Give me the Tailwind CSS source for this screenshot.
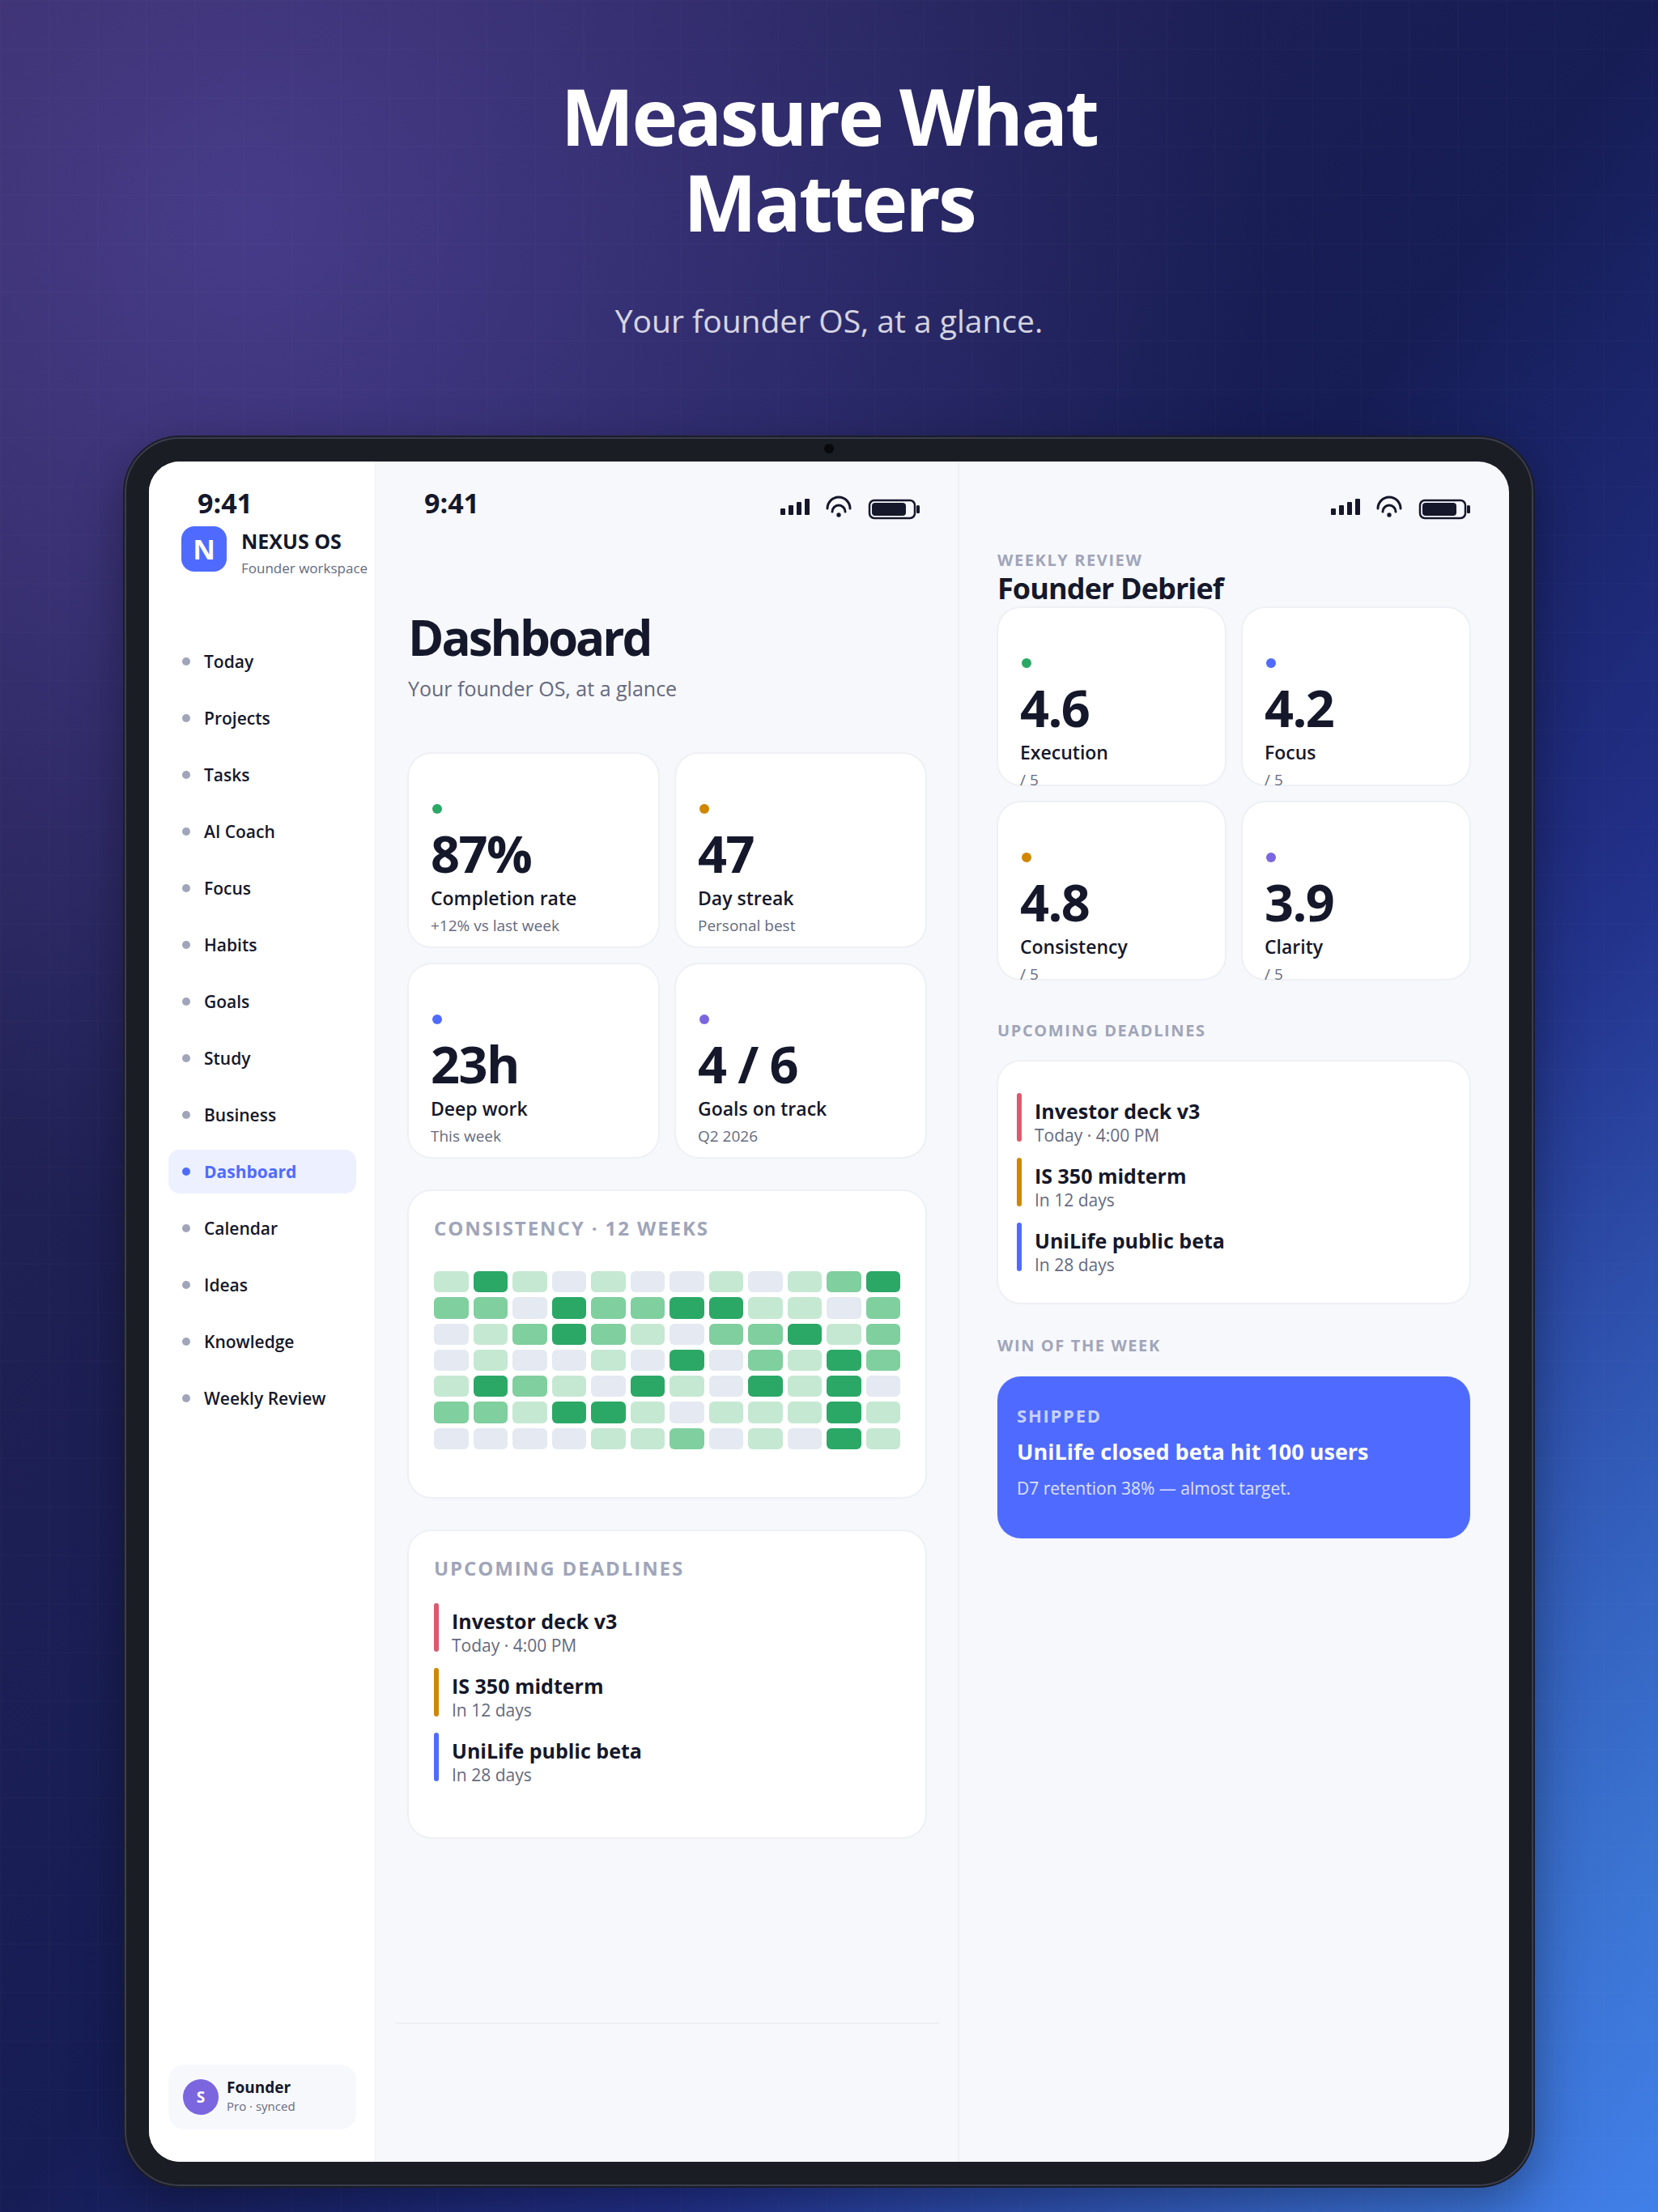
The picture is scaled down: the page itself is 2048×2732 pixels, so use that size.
<!DOCTYPE html>
<html lang="en">
<head>
    <meta charset="UTF-8">
    <meta name="viewport" content="width=device-width, initial-scale=1.0">
    <title>Nexus OS - Measure What Matters</title>
    <script src="https://cdn.jsdelivr.net/npm/@tailwindcss/browser@4"></script>
</head>
<body class="font-['Open_Sans','Noto_Sans',sans-serif] text-[#15182b] bg-[#161d55]">
    <!-- grid lines, purple glow, blue glow, base gradient -->
    <div class="min-h-screen overflow-hidden pb-[30px] bg-[repeating-linear-gradient(90deg,rgb(255_255_255/0.012)_0_2px,transparent_2px_60px),repeating-linear-gradient(180deg,rgb(255_255_255/0.012)_0_2px,transparent_2px_60px),radial-gradient(1250px_1250px_at_15%_10%,rgb(124_100_224/0.38),transparent),radial-gradient(1200px_1300px_at_100%_85%,rgb(66_160_210/0.26),transparent),linear-gradient(to_bottom_right,#2b2452_0%,#161d55_50%,#22308a_70%,#4179ee_100%)]">
        <header class="text-center pt-[90px]">
            <h1 class="text-[96px] leading-[106px] font-bold tracking-[-0.03em] text-white">Measure What<br>Matters</h1>
            <p class="mt-[66px] text-[39px] leading-[56px] text-white/80">Your founder OS, at a glance.</p>
        </header>

        <!-- tablet -->
        <div class="relative mt-[114px] mx-[152px] p-[2px] rounded-[70px] bg-[#1b1d25] shadow-[0_20px_60px_rgba(0,0,0,0.35)]">
            <div class="absolute left-1/2 -ml-[6px] top-[10px] size-3 rounded-full bg-[#08090d]"></div>
            <div class="p-[28px] border-2 border-[#3a3d4c] rounded-[68px]">
                <div class="flex min-h-[2100px] rounded-[38px] overflow-hidden bg-[#f7f8fc]">

                    <aside class="w-[280px] shrink-0 flex flex-col bg-white border-r border-[#eff0f5] pt-[29px] pb-10">
                        <div class="pl-[60px] text-[34px] leading-[44px] font-bold">9:41</div>
                        <div class="mt-[7px] pl-10 flex gap-[18px] whitespace-nowrap">
                            <div class="size-14 shrink-0 rounded-2xl bg-[#4f6bff] text-white text-[34px] font-bold flex items-center justify-center">N</div>
                            <div class="pt-px">
                                <div class="text-[25px] leading-[34px] font-bold">NEXUS OS</div>
                                <div class="mt-1 text-[17px] leading-[26px] text-[#656a80]">Founder workspace</div>
                            </div>
                        </div>
                        <nav id="nav" class="mt-[75px] pl-6 pr-[23px] flex flex-col gap-4"></nav>
                        <div class="mt-auto ml-6 mr-[23px] h-20 px-[18px] rounded-[20px] bg-[#f7f8fc] flex items-center gap-[10px]">
                            <div class="size-11 rounded-full bg-[#7b66e0] text-white text-[19px] font-bold flex items-center justify-center">S</div>
                            <div class="pb-1">
                                <div class="text-[19px] leading-[25px] font-bold">Founder</div>
                                <div class="text-[15px] leading-[20px] text-[#656a80]">Pro · synced</div>
                            </div>
                        </div>
                    </aside>

                    <main class="flex-1 min-w-0 pt-[29px] pl-10 pr-[39px]">
                        <div class="pl-5 pr-2 flex justify-between">
                            <div class="text-[34px] leading-[44px] font-bold">9:41</div>
                            <div class="status h-11 pt-[13px]"></div>
                        </div>
                        <h2 class="mt-[108px] text-[60px] leading-[72px] font-bold tracking-tighter">Dashboard</h2>
                        <p class="mt-[10px] text-[25px] leading-[34px] text-[#656a80]">Your founder OS, at a glance</p>
                        <div id="stats" class="mt-[63px] grid grid-cols-2 gap-5"></div>

                        <section class="mt-10 min-h-[380px] px-[31px] pt-[30px] pb-[58px] bg-white border ring-1 ring-[#eff0f5] border-[#eff0f5] rounded-[29px]">
                            <h3 class="text-[24px] leading-[32px] font-bold tracking-[0.08em] text-[#a0a5b9]">CONSISTENCY · 12 WEEKS</h3>
                            <div id="heatmap" class="mt-[37px] h-[220px] grid grid-cols-12 grid-rows-7 gap-[6px]"></div>
                        </section>

                        <section class="mt-10 min-h-[380px] px-[31px] pt-[30px] bg-white border ring-1 ring-[#eff0f5] border-[#eff0f5] rounded-[29px]">
                            <h3 class="text-[24px] leading-[32px] font-bold tracking-[0.08em] text-[#a0a5b9]">UPCOMING DEADLINES</h3>
                            <ul class="deadlines mt-[27px] flex flex-col gap-5"></ul>
                        </section>
                        <hr class="mt-[228px] -mx-4 border-0 h-[2px] bg-[#eff0f5]">
                    </main>

                    <aside class="w-[681px] shrink-0 pt-[29px] pl-[47px] pr-12 border-l-2 border-[#eff0f5]">
                        <div class="flex justify-end">
                            <div class="status h-11 pt-[13px]"></div>
                        </div>
                        <p class="mt-[37px] text-[20px] leading-[24px] font-bold tracking-[0.08em] text-[#a0a5b9]">WEEKLY REVIEW</p>
                        <h2 class="text-[36px] leading-[46px] font-bold tracking-tight">Founder Debrief</h2>
                        <div id="scores" class="grid grid-cols-2 gap-5"></div>

                        <h3 class="mt-[49px] text-[20px] leading-[28px] font-bold tracking-[0.08em] text-[#a0a5b9]">UPCOMING DEADLINES</h3>
                        <ul class="deadlines mt-[23px] px-[23px] py-[39px] flex flex-col gap-5 bg-white border ring-1 ring-[#eff0f5] border-[#eff0f5] rounded-[29px]"></ul>

                        <h3 class="mt-[38px] text-[20px] leading-[28px] font-bold tracking-[0.08em] text-[#a0a5b9]">WIN OF THE WEEK</h3>
                        <section class="mt-6 min-h-[200px] px-6 pt-8 bg-[#4f6bff] ring-1 ring-[#eff0f5] rounded-[29px] text-white">
                            <h4 class="text-[22px] leading-[32px] font-bold tracking-[0.08em] text-white/70">SHIPPED</h4>
                            <p class="mt-[10px] text-[27px] leading-[38px] font-bold">UniLife closed beta hit 100 users</p>
                            <p class="mt-[10px] text-[21px] leading-[32px] text-white/80">D7 retention 38% — almost target.</p>
                        </section>
                    </aside>
                </div>
            </div>
        </div>
    </div>

    <script>
        const pages = ["Today", "Projects", "Tasks", "AI Coach", "Focus", "Habits", "Goals", "Study", "Business", "Dashboard", "Calendar", "Ideas", "Knowledge", "Weekly Review"];
        const stats = [
            { value: "87%", label: "Completion rate", note: "+12% vs last week", dot: "bg-[#2ba866]" },
            { value: "47", label: "Day streak", note: "Personal best", dot: "bg-[#d08700]" },
            { value: "23h", label: "Deep work", note: "This week", dot: "bg-[#4f6bff]" },
            { value: "4 / 6", label: "Goals on track", note: "Q2 2026", dot: "bg-[#7b66e0]" }
        ];
        const scores = [
            { value: "4.6", label: "Execution", note: "/ 5", dot: "bg-[#2ba866]" },
            { value: "4.2", label: "Focus", note: "/ 5", dot: "bg-[#4f6bff]" },
            { value: "4.8", label: "Consistency", note: "/ 5", dot: "bg-[#d08700]" },
            { value: "3.9", label: "Clarity", note: "/ 5", dot: "bg-[#7b66e0]" }
        ];
        const deadlines = [
            { title: "Investor deck v3", due: "Today · 4:00 PM", bar: "bg-[#db5a6e]" },
            { title: "IS 350 midterm", due: "In 12 days", bar: "bg-[#d08700]" },
            { title: "UniLife public beta", due: "In 28 days", bar: "bg-[#4f6bff]" }
        ];
        // one string per weekday, one digit per week
        const weeks = ["131010010123", "220322331102", "012321022312", "010010302132", "132103103130", "221331011131", "000011201031"];
        const levels = ["bg-[#e4e9f2]", "bg-[#c5e8d2]", "bg-[#80cf9f]", "bg-[#2ba866]"];

        document.getElementById('nav').innerHTML = pages.map(p => `
            <a href="#" class="${p === "Dashboard" ? "bg-[#edf0ff] text-[#4f6bff] font-bold" : "font-semibold"} h-[54px] pl-[17px] flex items-center gap-[17px] rounded-[14px] text-[21px] whitespace-nowrap">
                <span class="${p === "Dashboard" ? "bg-[#4f6bff]" : "bg-[#a0a5b9]"} size-[10px] rounded-full"></span>
                <span class="pt-[2px]">${p}</span>
            </a>
        `).join('');

        const card = (s, height) => `
            <div class="${height} px-[27px] pt-[62px] bg-white border ring-1 ring-[#eff0f5] border-[#eff0f5] rounded-[29px] whitespace-nowrap">
                <div class="${s.dot} ml-[2px] size-3 rounded-full"></div>
                <div class="mt-[17px] text-[63px] leading-[64px] font-bold tracking-tight">${s.value}</div>
                <div class="mt-2 text-[23px] leading-[30px] font-semibold">${s.label}</div>
                <div class="mt-1 text-[19px] leading-[30px] text-[#656a80]">${s.note}</div>
            </div>
        `;
        document.getElementById('stats').innerHTML = stats.map(s => card(s, "min-h-[240px]")).join('');
        document.getElementById('scores').innerHTML = scores.map(s => card(s, "h-[220px]")).join('');

        document.getElementById('heatmap').innerHTML = weeks.join('').split('').map(n => `<div class="${levels[n]} rounded-[6px]"></div>`).join('');

        document.querySelectorAll('.deadlines').forEach(list => {
            list.innerHTML = deadlines.map(d => `
                <li class="flex gap-4 h-[60px]">
                    <span class="${d.bar} w-[6px] rounded-[3px]"></span>
                    <div class="pt-[5px]">
                        <div class="text-[25px] leading-[34px] font-bold">${d.title}</div>
                        <div class="text-[21px] leading-[26px] text-[#656a80]">${d.due}</div>
                    </div>
                </li>
            `).join('');
        });

        // signal, wifi, battery
        document.querySelectorAll('.status').forEach(el => {
            el.innerHTML = `
                <svg class="block" width="172" height="31" viewBox="0 -4 172 31" fill="none">
                    <g fill="#15182b">
                        <rect x="0" y="12" width="6" height="8" rx="1"/><rect x="10" y="8" width="6" height="12" rx="1"/>
                        <rect x="20" y="4" width="6" height="16" rx="1"/><rect x="30" y="0" width="6" height="20" rx="1"/>
                        <circle cx="72" cy="20" r="2.7"/>
                        <rect x="113" y="5" width="42" height="16" rx="4"/><rect x="168" y="8" width="4" height="10" rx="1.5"/>
                    </g>
                    <g stroke="#15182b" stroke-linecap="round">
                        <path stroke-width="3" d="M58 12a14 14 0 0 1 28 0M64 16a8 8 0 0 1 16 0"/>
                        <rect x="110" y="2" width="56" height="22" rx="6" stroke-width="2.5"/>
                    </g>
                </svg>
            `;
        });
    </script>
</body>
</html>
